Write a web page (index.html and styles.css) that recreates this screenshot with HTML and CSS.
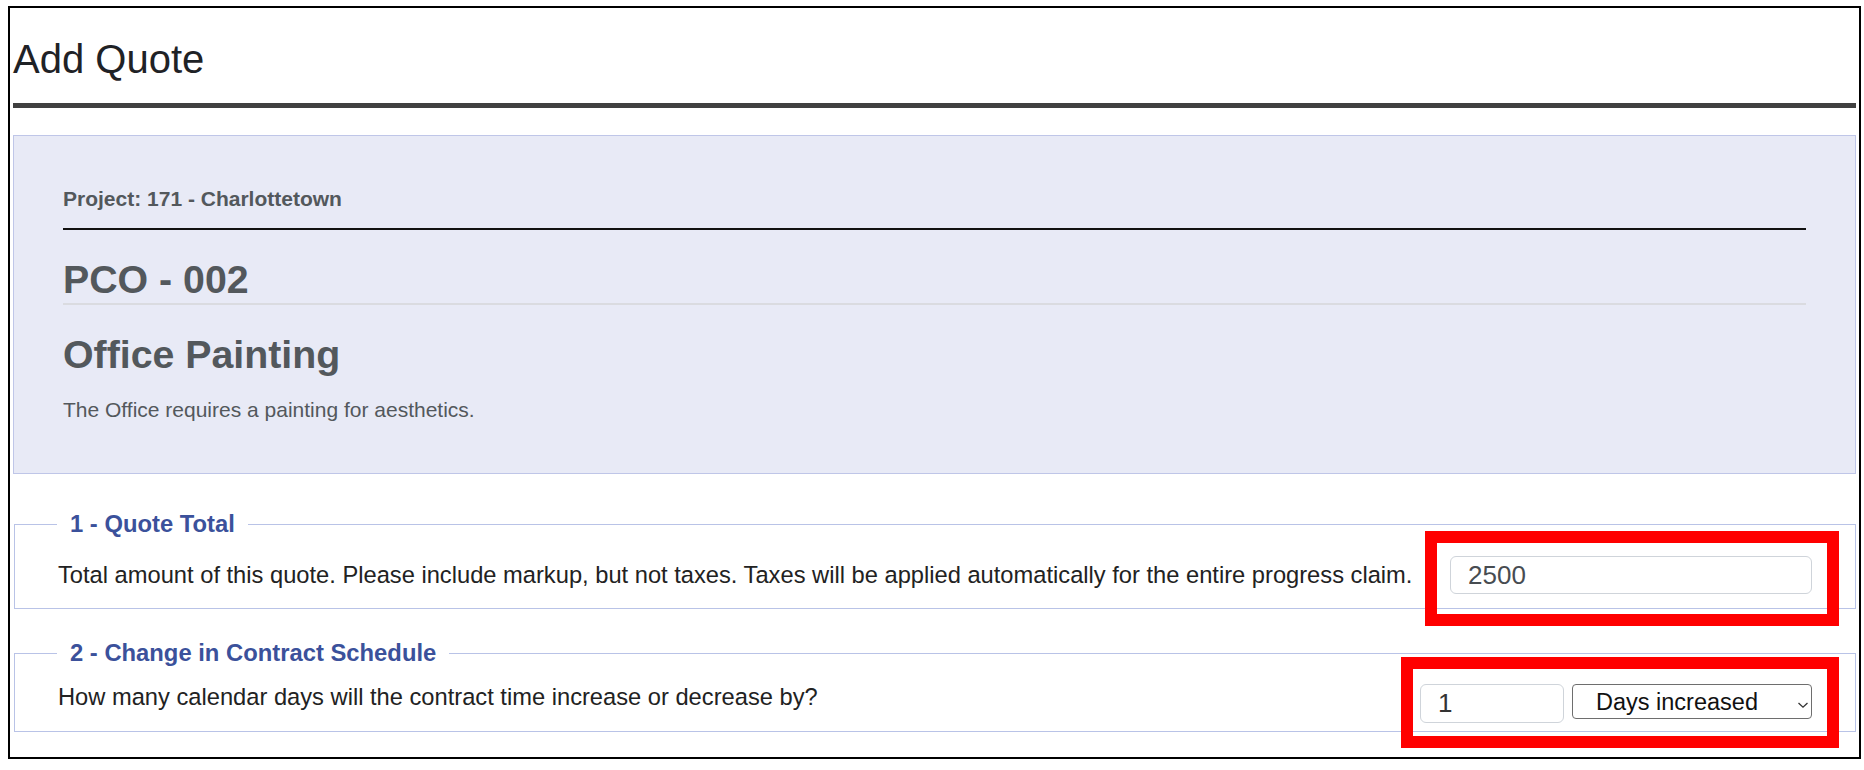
FILE: index.html
```html
<!DOCTYPE html>
<html lang="en">
<head>
<meta charset="utf-8">
<title>Add Quote</title>
<link rel="stylesheet" href="styles.css">
</head>
<body>
<div class="page">
  <h1 class="title">Add Quote</h1>
  <hr class="title-rule">

  <section class="info">
    <div class="project">Project: 171 - Charlottetown</div>
    <h2 class="heading heading-pco">PCO - 002</h2>
    <h2 class="heading heading-name">Office Painting</h2>
    <p class="desc">The Office requires a painting for aesthetics.</p>
  </section>

  <fieldset class="step step-1">
    <legend class="step-legend">1 - Quote Total</legend>
    <div class="row row-center">
      <span class="question">Total amount of this quote. Please include markup, but not taxes. Taxes will be applied automatically for the entire progress claim.</span>
      <div class="controls">
        <input class="field field-total" type="text" value="2500">
        <span class="mark mark-1"></span>
      </div>
    </div>
  </fieldset>

  <fieldset class="step step-2">
    <legend class="step-legend">2 - Change in Contract Schedule</legend>
    <div class="row row-top">
      <span class="question">How many calendar days will the contract time increase or decrease by?</span>
      <div class="controls controls-pair">
        <input class="field field-days" type="text" value="1">
        <div class="select-wrap">
          <select class="select">
            <option>Days increased</option>
            <option>Days decreased</option>
          </select>
          <svg class="chevron" width="12" height="8" viewBox="0 0 12 8" aria-hidden="true">
            <polyline points="1.5,2 6,6.2 10.5,2" fill="none" stroke="#333" stroke-width="1.3"/>
          </svg>
        </div>
        <span class="mark mark-2"></span>
      </div>
    </div>
  </fieldset>
</div>
</body>
</html>
```

FILE: styles.css
```css
* {
  box-sizing: border-box;
}

html, body {
  margin: 0;
  padding: 0;
  background: #ffffff;
}

body {
  font-family: "Liberation Sans", Arial, Helvetica, sans-serif;
  color: #222222;
}

.page {
  margin: 6px 3px 0 8px;
  border: 2px solid #000000;
  padding: 0 3px 25px 3px;
}

.title {
  margin: 0;
  padding-top: 28px;
  font-size: 40px;
  line-height: 46px;
  font-weight: normal;
  color: #1f2226;
}

.title-rule {
  margin: 21px 0 0 0;
  height: 5px;
  border: 0;
  background: #404040;
}

.info {
  margin-top: 27px;
  background: #e8eaf6;
  border: 1px solid #bfc6e8;
  padding: 51px 49px;
  color: #53585c;
}

.project {
  font-size: 21px;
  line-height: 24px;
  font-weight: bold;
  padding-bottom: 17px;
  border-bottom: 2px solid #111111;
}

.heading {
  margin: 26px 0 0 0;
  font-size: 39.3px;
  line-height: 46px;
  font-weight: bold;
}

.heading-pco {
  padding-bottom: 1px;
  border-bottom: 2px solid #dadbe0;
}

.desc {
  margin: 21px 0 0 0;
  font-size: 21px;
  line-height: 24px;
}

.step {
  margin: 0 0 0 1px;
  border: 1px solid #b9c3e7;
  padding: 18px 43px 14px 43px;
  min-width: 0;
}

.step-1 {
  margin-top: 36px;
}

.step-2 {
  margin-top: 30px;
  padding-top: 17px;
  padding-bottom: 8px;
}

.step-legend {
  margin-left: -1px;
  padding: 0 13px;
  font-size: 23.8px;
  line-height: 28px;
  font-weight: bold;
  color: #3b519b;
}

.row {
  display: flex;
  justify-content: space-between;
  gap: 20px;
}

.row-center {
  align-items: center;
}

.row-top {
  align-items: flex-start;
}

.question {
  font-size: 23.7px;
  line-height: 27px;
  color: #222222;
  white-space: nowrap;
}

.controls {
  position: relative;
  display: flex;
  align-items: flex-start;
}

.controls-pair {
  gap: 8px;
}

.field {
  font-family: "Liberation Sans", Arial, Helvetica, sans-serif;
  font-size: 26px;
  color: #474c51;
  background: #ffffff;
  border: 1px solid #cfd4da;
  border-radius: 6px;
  padding: 0 17px;
  margin: 0;
  outline: none;
}

.field-total {
  width: 362px;
  height: 38px;
}

.field-days {
  width: 144px;
  height: 39px;
  color: #333333;
}

.select-wrap {
  position: relative;
}

.select {
  appearance: none;
  -webkit-appearance: none;
  width: 240px;
  height: 35px;
  margin: 0;
  padding: 0 30px 0 23px;
  border: 1px solid #6e6e6e;
  border-radius: 4px;
  background: #ffffff;
  font-family: "Liberation Sans", Arial, Helvetica, sans-serif;
  font-size: 23.5px;
  color: #111111;
}

.chevron {
  position: absolute;
  left: 225px;
  top: 17px;
  pointer-events: none;
}

.mark {
  position: absolute;
  border: 12px solid #ff0000;
  pointer-events: none;
}

.mark-1 {
  top: -25px;
  left: -25px;
  right: -27px;
  bottom: -32px;
}

.mark-2 {
  top: -27px;
  left: -19px;
  right: -27px;
  bottom: -25px;
}
```
